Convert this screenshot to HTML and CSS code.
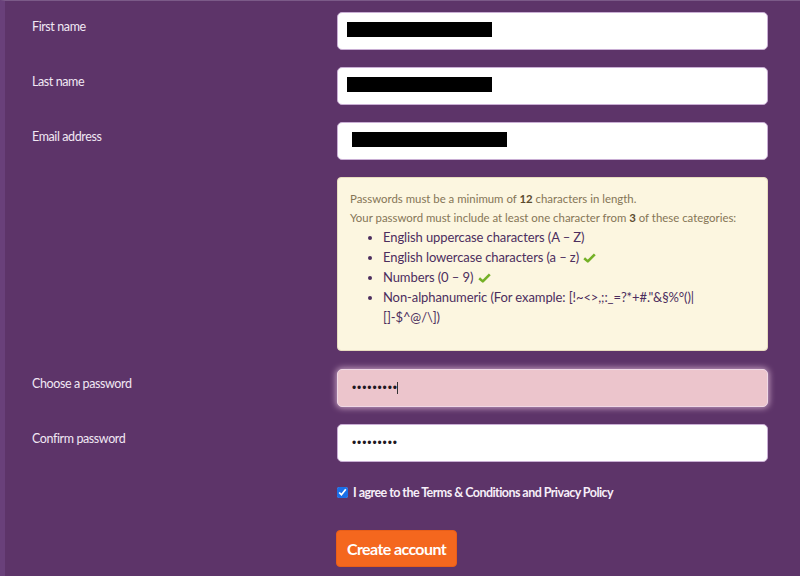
FILE: index.html
```html
<!DOCTYPE html>
<html lang="en">
<head>
<meta charset="utf-8">
<title>Create account</title>
<link rel="stylesheet" href="styles.css">
</head>
<body>
<div class="page">
  <form class="form" onsubmit="return false">
    <label class="label">First name</label>
    <div class="field"><span class="redact redact-a"></span></div>

    <label class="label">Last name</label>
    <div class="field"><span class="redact redact-a"></span></div>

    <label class="label">Email address</label>
    <div class="field"><span class="redact redact-b"></span></div>

    <div class="rules">
      <p class="intro">Passwords must be a minimum of <b>12</b> characters in length.</p>
      <p class="intro">Your password must include at least one character from <b>3</b> of these categories:</p>
      <ul class="rule-list">
        <li>English uppercase characters (A – Z)</li>
        <li>English lowercase characters (a – z) <svg class="tick" viewBox="0 0 13 10" width="13" height="10"><path d="M1.2 5.2 L4.8 8.4 L11.8 1.4" fill="none" stroke="#74b026" stroke-width="2.6" stroke-linejoin="round"/></svg></li>
        <li>Numbers (0 – 9) <svg class="tick" viewBox="0 0 13 10" width="13" height="10"><path d="M1.2 5.2 L4.8 8.4 L11.8 1.4" fill="none" stroke="#74b026" stroke-width="2.6" stroke-linejoin="round"/></svg></li>
        <li>Non-alphanumeric (For example: [!~&lt;&gt;,;:_=?*+#."&amp;§%°()|<br>[]-$^@/\])</li>
      </ul>
    </div>

    <label class="label label-pw">Choose a password</label>
    <div class="field field-error field-pw"><span class="dots">•••••••••</span><span class="caret"></span></div>

    <label class="label">Confirm password</label>
    <div class="field"><span class="dots">•••••••••</span></div>

    <div class="agree">
      <input type="checkbox" class="check" checked>
      <span>I agree to the Terms &amp; Conditions and Privacy Policy</span>
    </div>

    <div class="actions">
      <button class="btn" type="submit">Create account</button>
    </div>
  </form>
</div>
</body>
</html>
```

FILE: styles.css
```css
html, body {
  margin: 0;
  padding: 0;
  height: 100%;
}

body {
  background: #5d3469;
  font-family: Lato, "Noto Sans", sans-serif;
}

.page {
  min-height: 100%;
  box-sizing: border-box;
  border-left: 5px solid #69407a;
  border-top: 1px solid #7b5a88;
  padding: 11px 0 0 27px;
}

.form {
  display: grid;
  grid-template-columns: 305px 431px;
  row-gap: 17px;
  align-items: start;
}

.label {
  color: #f1e8f4;
  font-size: 12.5px;
  letter-spacing: -0.4px;
  line-height: 16px;
  padding-top: 7px;
}

.field {
  grid-column: 2;
  height: 38px;
  box-sizing: border-box;
  background: #fff;
  border: 1px solid #c9aed4;
  border-radius: 5px;
  display: flex;
  align-items: center;
  padding: 0 14px;
}

.redact {
  display: block;
  background: #000;
  height: 15px;
}

.redact-a {
  width: 145px;
  margin: -3px 0 0 -5px;
}

.redact-b {
  width: 155px;
  margin: -3px 0 0 0;
}

.rules {
  grid-column: 2;
  background: #fcf6e0;
  border: 1px solid #e7dcbf;
  border-radius: 4px;
  padding: 11px 12px 23px 12px;
  box-sizing: border-box;
  height: 174px;
}

.intro {
  margin: 0;
  color: #857556;
  font-size: 11.4px;
  letter-spacing: 0;
  line-height: 19px;
}

.intro b {
  color: #5b4b2e;
  font-weight: 700;
}

.rule-list {
  margin: 0;
  padding-left: 33px;
  color: #4c2e5e;
  font-size: 13px;
  letter-spacing: -0.1px;
  line-height: 20px;
}

.rule-list li::marker {
  font-size: 12px;
}

.tick {
  vertical-align: -1px;
  margin-left: 1px;
}

.label-pw {
  margin-top: 1px;
}

.field-pw {
  margin-top: 1px;
}

.field-error {
  background: #ecc5cc;
  border-color: #f0d8e4;
  box-shadow: 0 0 6px 1px rgba(236, 200, 226, 0.75);
}

.dots {
  color: #1f1822;
  font-family: "Liberation Sans", sans-serif;
  font-size: 12px;
  letter-spacing: 0.9px;
  line-height: 1;
}

.caret {
  display: inline-block;
  width: 1px;
  height: 12px;
  background: #333;
  margin-left: -1px;
}

.agree {
  grid-column: 2;
  display: flex;
  align-items: center;
  gap: 5px;
  margin-top: 6px;
  color: #f6eef8;
  font-size: 12.5px;
  font-weight: 700;
  letter-spacing: -0.55px;
}

.check {
  margin: 0;
  width: 11px;
  height: 11px;
  accent-color: #1a6fe8;
}

.actions {
  grid-column: 2;
  margin-top: 13px;
}

.btn {
  margin-left: -1px;
  background: #f4671e;
  color: #fff;
  border: 1px solid #e85e18;
  border-radius: 4px;
  height: 37px;
  width: 121px;
  font-family: Lato, sans-serif;
  font-size: 16px;
  font-weight: 700;
  letter-spacing: -0.6px;
  padding: 0;
  cursor: pointer;
}
```
